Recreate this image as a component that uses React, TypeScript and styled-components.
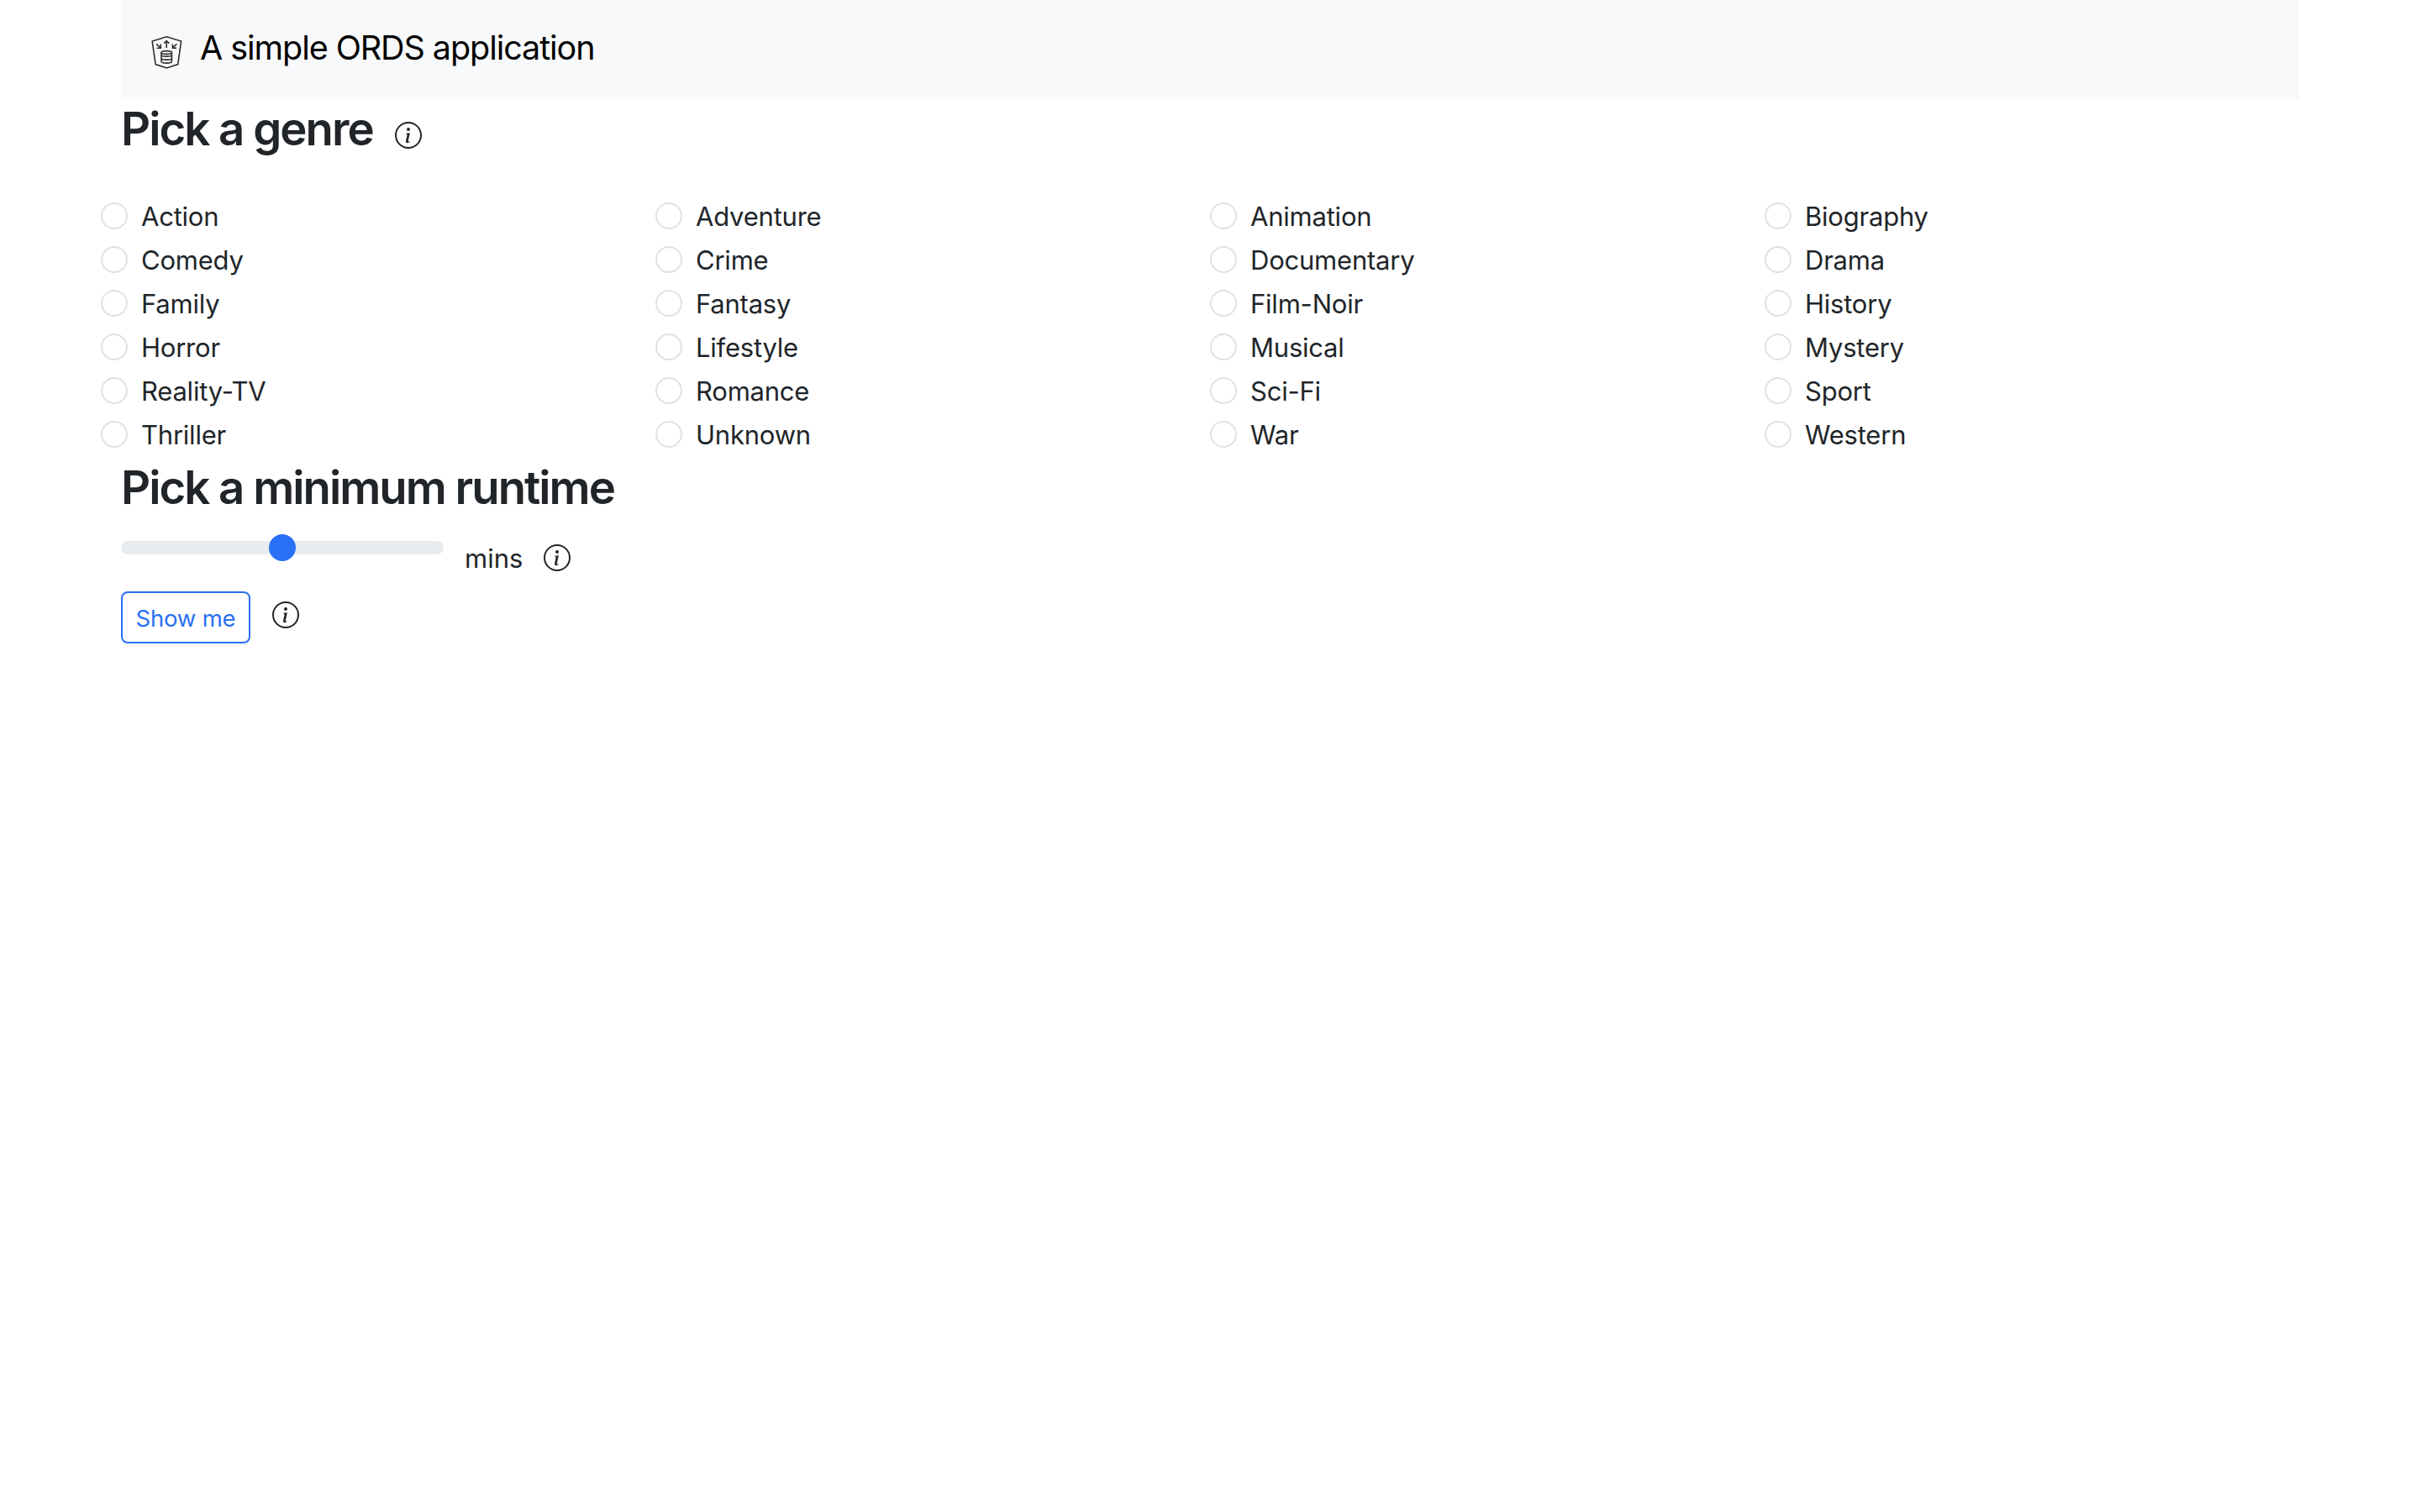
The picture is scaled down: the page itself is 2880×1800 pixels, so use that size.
import React, { useState } from "react";
import styled, { createGlobalStyle } from "styled-components";
import { BsInfoCircle } from "react-icons/bs";

const GlobalStyle = createGlobalStyle`
  *, *::before, *::after { box-sizing: border-box; }
  body {
    margin: 0;
    background: #fff;
    color: #212529;
    font-family: Inter, "Liberation Sans", sans-serif;
    font-size: 31px;
    font-weight: 400;
    line-height: 48px;
  }
`;

const Container = styled.div`
  margin: 0 144px;
`;

const Navbar = styled.nav`
  display: flex;
  align-items: flex-start;
  height: 118px;
  padding: 27px 36px;
  background: #f8f9fb;
`;

const BrandMark = styled.svg`
  width: 37px;
  height: 40px;
  margin: 15px 21px 0 0;
  flex: none;
`;

const BrandName = styled.a`
  color: #000;
  font-size: 39.5px;
  line-height: 60px;
  letter-spacing: -1.07px;
  white-space: nowrap;
`;

const HeadingRow = styled.div<{ $gap: number }>`
  display: flex;
  align-items: flex-start;
  margin-bottom: ${({ $gap }) => $gap}px;
`;

const Heading = styled.h3`
  margin: 0;
  font-size: 54.5px;
  font-weight: 600;
  line-height: 71px;
  letter-spacing: -1.97px;
  white-space: nowrap;
`;

const InfoIcon = styled(BsInfoCircle)<{ $left: number; $top: number }>`
  width: 32px;
  height: 32px;
  flex: none;
  margin-left: ${({ $left }) => $left}px;
  margin-top: ${({ $top }) => $top}px;
`;

const GenreGrid = styled.div`
  display: grid;
  grid-template-columns: repeat(4, 1fr);
  grid-auto-rows: 48px;
  row-gap: 4px;
  margin: 0 -24px 4px;
`;

const Option = styled.label`
  display: flex;
  align-items: flex-start;
`;

const Radio = styled.input`
  appearance: none;
  flex: none;
  width: 32px;
  height: 32px;
  margin: 8px 16px 0 0;
  border: 2px solid #dee2e6;
  border-radius: 50%;
  background: #fff;
  &:checked {
    border: 10px solid #2970f6;
  }
`;

const OptionText = styled.span`
  margin-top: 1px;
  letter-spacing: -0.22px;
`;

const RuntimeRow = styled.div`
  display: flex;
  align-items: flex-start;
  height: 76px;
`;

const Range = styled.input`
  appearance: none;
  width: 384px;
  height: 48px;
  margin: 0 25px 0 0;
  padding: 0;
  background: transparent;
  &::-webkit-slider-runnable-track {
    height: 16px;
    border-radius: 8px;
    background: #e8ecef;
  }
  &::-webkit-slider-thumb {
    appearance: none;
    width: 32px;
    height: 32px;
    margin-top: -8px;
    border-radius: 50%;
    background: #2970f6;
  }
`;

const Unit = styled.span`
  margin-top: 13px;
`;

const ActionRow = styled.div`
  display: flex;
  align-items: flex-start;
`;

const Submit = styled.button`
  width: 154px;
  height: 62px;
  padding: 2px 0 0;
  border: 2px solid #2970f6;
  border-radius: 8px;
  background: #fff;
  color: #2970f6;
  font: inherit;
  font-size: 27.5px;
  line-height: 42px;
  letter-spacing: -0.2px;
`;

const genres = [
  "Action", "Adventure", "Animation", "Biography",
  "Comedy", "Crime", "Documentary", "Drama",
  "Family", "Fantasy", "Film-Noir", "History",
  "Horror", "Lifestyle", "Musical", "Mystery",
  "Reality-TV", "Romance", "Sci-Fi", "Sport",
  "Thriller", "Unknown", "War", "Western",
];

function Logo() {
  return (
    <BrandMark viewBox="0 0 37 40" fill="none" stroke="#312d2a" strokeWidth="1.6">
      <path d="M18.3 1.8 L1.2 7 L5.1 34.6 L18.3 39 L31.7 34.6 L35.6 7 Z" />
      <ellipse cx="18.2" cy="20.5" rx="6.2" ry="1.9" />
      <path d="M12 20.5 V31 C12 33.8 24.4 33.8 24.4 31 V20.5" />
      <path d="M12 23.4 C12 25.7 24.4 25.7 24.4 23.4 M12 27.4 C12 29.7 24.4 29.7 24.4 27.4" />
      <path d="M18.2 15 V6.8 M15 9.8 L18.2 6.6 L21.4 9.8" />
      <path d="M6.2 10.4 L11 15 M11.2 10.6 V15.2 H6.6" />
      <path d="M30.4 10.4 L25.6 15 M25.4 10.6 V15.2 H30" />
    </BrandMark>
  );
}

export default function App() {
  const [genre, setGenre] = useState("");
  const [runtime, setRuntime] = useState(50);
  return (
    <>
      <GlobalStyle />
      <Container>
        <Navbar>
          <Logo />
          <BrandName>A simple ORDS application</BrandName>
        </Navbar>
        <HeadingRow $gap={44}>
          <Heading>Pick a genre</Heading>
          <InfoIcon $left={26} $top={27} />
        </HeadingRow>
        <GenreGrid>
          {genres.map((name) => (
            <Option key={name}>
              <Radio
                type="radio"
                name="genre"
                checked={genre === name}
                onChange={() => setGenre(name)}
              />
              <OptionText>{name}</OptionText>
            </Option>
          ))}
        </GenreGrid>
        <HeadingRow $gap={12}>
          <Heading>Pick a minimum runtime</Heading>
        </HeadingRow>
        <RuntimeRow>
          <Range
            type="range"
            min={0}
            max={100}
            value={runtime}
            onChange={(e) => setRuntime(Number(e.target.value))}
          />
          <Unit>mins</Unit>
          <InfoIcon $left={25} $top={20} />
        </RuntimeRow>
        <ActionRow>
          <Submit type="button">Show me</Submit>
          <InfoIcon $left={26} $top={12} />
        </ActionRow>
      </Container>
    </>
  );
}
